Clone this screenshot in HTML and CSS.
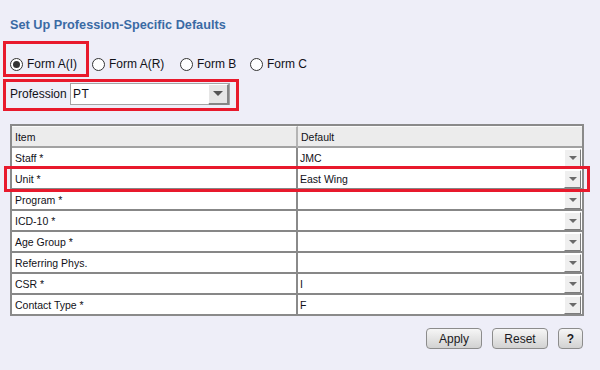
FILE: index.html
```html
<!DOCTYPE html>
<html lang="en">
<head>
<meta charset="UTF-8">
<title>Set Up Profession-Specific Defaults</title>
<link rel="stylesheet" href="styles.css">
</head>
<body>

<div class="page">
    <h1 class="title">Set Up Profession-Specific Defaults</h1>

    <div class="forms">
        <label class="opt opt-1 mark mark-form"><span class="radio on"></span>Form A(I)</label>
        <label class="opt opt-2"><span class="radio"></span>Form A(R)</label>
        <label class="opt opt-3"><span class="radio"></span>Form B</label>
        <label class="opt"><span class="radio"></span>Form C</label>
    </div>

    <div class="prof mark mark-prof">
        <span class="prof-label">Profession</span>
        <div class="combo combo-big">
            <span class="val">PT</span>
            <span class="drop"><i class="tri"></i></span>
        </div>
    </div>

    <table class="grid">
        <thead>
            <tr><th class="item">Item</th><th>Default</th></tr>
        </thead>
        <tbody>
            <tr><td class="item">Staff *</td><td class="def"><div class="combo"><span class="val">JMC</span><span class="drop"><i class="tri"></i></span></div></td></tr>
            <tr class="mark mark-row"><td class="item">Unit *</td><td class="def"><div class="combo"><span class="val">East Wing</span><span class="drop"><i class="tri"></i></span></div></td></tr>
            <tr><td class="item">Program *</td><td class="def"><div class="combo"><span class="val"></span><span class="drop"><i class="tri"></i></span></div></td></tr>
            <tr><td class="item">ICD-10 *</td><td class="def"><div class="combo"><span class="val"></span><span class="drop"><i class="tri"></i></span></div></td></tr>
            <tr><td class="item">Age Group *</td><td class="def"><div class="combo"><span class="val"></span><span class="drop"><i class="tri"></i></span></div></td></tr>
            <tr><td class="item">Referring Phys.</td><td class="def"><div class="combo"><span class="val"></span><span class="drop"><i class="tri"></i></span></div></td></tr>
            <tr><td class="item">CSR *</td><td class="def"><div class="combo"><span class="val">I</span><span class="drop"><i class="tri"></i></span></div></td></tr>
            <tr><td class="item">Contact Type *</td><td class="def"><div class="combo"><span class="val">F</span><span class="drop"><i class="tri"></i></span></div></td></tr>
        </tbody>
    </table>

    <div class="actions">
        <button type="button" class="btn">Apply</button>
        <button type="button" class="btn">Reset</button>
        <button type="button" class="btn btn-help">?</button>
    </div>
</div>

</body>
</html>
```

FILE: styles.css
```css
body {
    margin: 0;
    padding: 0;
    background-color: #eeeef8;
    font-family: "Liberation Sans", Arial, sans-serif;
    color: #111118;
}

.page {
    padding: 17px 16px 0 10px;
}

.title {
    margin: 0;
    font-size: 12.7px;
    line-height: 16px;
    font-weight: bold;
    color: #3a6aa4;
}

/* red annotation boxes */
.mark {
    position: relative;
}

.mark::after {
    content: "";
    position: absolute;
    border: 3px solid #e8192c;
    pointer-events: none;
}

.mark-form::after {
    left: -7px;
    right: 3px;
    top: -15px;
    bottom: -5px;
}

.mark-prof::after {
    left: -7px;
    right: -9px;
    top: -4px;
    bottom: -6px;
}

.mark-row::after {
    left: -8px;
    right: -8px;
    top: -3px;
    bottom: -2px;
}

.forms {
    display: flex;
    align-items: center;
    margin-top: 23px;
    height: 16px;
    font-size: 12px;
}

.opt {
    display: flex;
    align-items: center;
    height: 16px;
}

.opt-1 { width: 82px; }
.opt-2 { width: 88px; }
.opt-3 { width: 70px; }

.radio {
    width: 11px;
    height: 11px;
    border: 1px solid #333;
    border-radius: 50%;
    background: #fff;
    margin-right: 4px;
    display: flex;
    align-items: center;
    justify-content: center;
}

.radio.on::before {
    content: "";
    width: 7px;
    height: 7px;
    border-radius: 50%;
    background: #333;
}

.prof {
    display: flex;
    align-items: center;
    width: 220px;
    margin-top: 11px;
    font-size: 12px;
}

.prof-label {
    width: 60px;
}

.combo {
    display: flex;
    align-items: center;
    background: #fff;
}

.combo-big {
    width: 158px;
    height: 20px;
    border: 1px solid #a4a4a4;
    font-size: 12px;
    letter-spacing: 0.5px;
}

.val {
    flex: 1;
    padding-left: 2px;
    white-space: nowrap;
}

.drop {
    display: flex;
    align-items: center;
    justify-content: center;
    width: 15px;
    height: 16px;
    background: #efefef;
    border-top: 1px solid #fff;
    border-left: 1px solid #fff;
    border-right: 1px solid #7c7c7c;
    border-bottom: 1px solid #7c7c7c;
    margin-right: 1px;
}

.tri {
    width: 0;
    height: 0;
    border-left: 4px solid transparent;
    border-right: 4px solid transparent;
    border-top: 4px solid #6a6a6a;
}

.combo-big .drop {
    width: 18px;
    height: 18px;
    background: #e6e6e6;
    border-right: 2px solid #858585;
    border-bottom: 2px solid #858585;
    margin-right: 0;
}

.combo-big .tri {
    border-left-width: 5px;
    border-right-width: 5px;
    border-top-width: 5px;
    border-top-color: #555;
}

/* defaults grid */
.grid {
    margin-top: 19px;
    width: 574px;
    border: 2px solid #8a8a8a;
    border-spacing: 0;
    background: #fff;
    font-size: 10.5px;
}

.grid th {
    height: 19px;
    padding: 0 0 0 3px;
    text-align: left;
    font-weight: normal;
    background: #ececec;
    border-bottom: 2px solid #a2a2a2;
    border-top: 1px solid #fafafa;
}

.grid th.item {
    border-right: 2px solid #b4b4b4;
}

.grid td {
    height: 19px;
    padding: 0;
    border-bottom: 2px solid #878787;
}

.grid tr:last-child td {
    border-bottom: 0;
}

.grid td.item {
    width: 281px;
    padding-left: 3px;
    border-right: 2px solid #8a8a8a;
}

.grid td.def .combo {
    height: 19px;
    font-size: 10.5px;
}

.grid td.def .val {
    padding-left: 2px;
}

.actions {
    display: flex;
    justify-content: flex-end;
    gap: 10px;
    margin-top: 12px;
    padding-right: 1px;
}

.btn {
    height: 21px;
    width: 56px;
    padding: 0;
    font-family: "Liberation Sans", Arial, sans-serif;
    font-size: 12px;
    color: #1a1a22;
    border: 1px solid #8c8c8c;
    border-radius: 4px;
    background: linear-gradient(#f6f6f6, #d2d2d2);
}

.btn-help {
    width: 25px;
    font-weight: bold;
}
```
